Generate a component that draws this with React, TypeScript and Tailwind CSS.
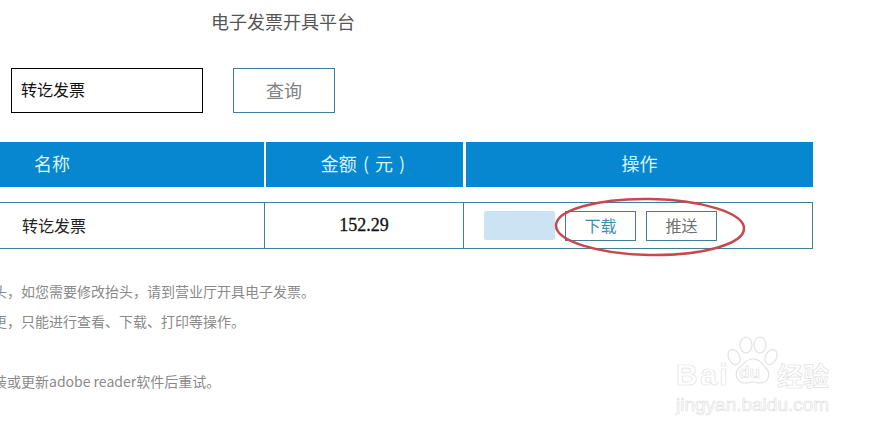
import React from "react";

const cjk = "font-['Microsoft_YaHei','Noto_Sans_CJK_SC',sans-serif]";

const notes = [
  "头，如您需要修改抬头，请到营业厅开具电子发票。",
  "更，只能进行查看、下载、打印等操作。",
  "",
  "装或更新adobe reader软件后重试。",
];

const Watermark: React.FC = () => (
  <div className="absolute left-[676px] top-[335px] w-[180px] h-[80px] font-['Liberation_Sans',sans-serif] text-white [-webkit-text-stroke:0.7px_#e2e2e2]">
    <svg className="absolute left-[50px] top-[1px]" width="52" height="50" viewBox="0 0 52 50" fill="#fff" stroke="#e2e2e2" strokeWidth="1.2">
      <ellipse cx="8" cy="21" rx="5.5" ry="8" transform="rotate(-25 8 21)" />
      <ellipse cx="20" cy="9" rx="6" ry="8" />
      <ellipse cx="34" cy="9" rx="6" ry="8" />
      <ellipse cx="45" cy="21" rx="5.5" ry="8" transform="rotate(25 45 21)" />
      <path d="M27 23c7 0 9 5 13 9 5 5 3 15-6 15-3 0-4-1-7-1s-5 1-8 1c-9 0-11-10-6-15 5-4 7-9 14-9z" />
    </svg>
    <div className="absolute left-0 top-[23px] text-[30px] leading-[34px] font-bold tracking-[2.5px]">Bai</div>
    <div className="absolute left-[63px] top-[28px] text-[17px] leading-[20px] font-bold">du</div>
    <div className={`absolute left-[101px] top-[24px] text-[26px] leading-[32px] font-bold whitespace-nowrap ${cjk}`}>经验</div>
    <div className="absolute left-0 top-[58px] text-[19px] leading-[24px] whitespace-nowrap">jingyan.baidu.com</div>
  </div>
);

const App: React.FC = () => {
  return (
    <div className={`relative w-[881px] h-[432px] overflow-hidden bg-white ${cjk}`}>
      <div className="ml-[-247px] w-[1060px]">
        <h1 className="pt-[8px] h-[68px] text-center text-[18px] leading-[26px] font-normal text-[#555]">
          电子发票开具平台
        </h1>

        <div className="flex pl-[258px] gap-[30px]">
          <div className="w-[192px] h-[45px] pl-[9px] pb-[3px] flex items-center border border-black text-[16px] text-[#111]">
            转讫发票
          </div>
          <button className="w-[102px] h-[45px] pb-[1px] border border-[#3f7f9c] text-[18px] text-[#808080]">
            查询
          </button>
        </div>

        <div className="mt-[29px] flex h-[45px] gap-[2px] bg-white text-[18px] text-[#d8f3fa]">
          <div className="w-[511px] bg-[#0787cf] pl-[281px] pb-[2px] flex items-center">名称</div>
          <div className="w-[197px] bg-[#0787cf] pr-[3px] pb-[2px] flex items-center justify-center [word-spacing:2px]">金额 ( 元 )</div>
          <div className="flex-1 ml-[1px] bg-[#0787cf] pb-[2px] flex items-center justify-center">操作</div>
        </div>

        <div className="mt-[15px] flex h-[47px] border border-[#3f7f9c] text-[16px] text-[#222]">
          <div className="w-[511px] pl-[268px] pb-[2px] flex items-center border-r border-[#3f7f9c]">转讫发票</div>
          <div className="w-[199px] pb-[1px] flex items-center justify-center border-r border-[#3f7f9c] font-['Liberation_Serif',serif] text-[18px] text-[#111] [-webkit-text-stroke:0.3px_#111]">
            152.29
          </div>
          <div className="flex-1 pl-[20px] flex items-center">
            <div className="w-[71px] h-[29px] rounded-[2px] bg-[#cce3f3]" />
            <button className="ml-[10px] w-[71px] h-[30px] pb-[1px] border border-[#3f7f9c] text-[16px] text-[#3d8fae]">
              下载
            </button>
            <button className="ml-[10px] w-[71px] h-[30px] pb-[1px] border border-[#3f7f9c] text-[16px] text-[#707070]">
              推送
            </button>
          </div>
        </div>

        <div className="mt-[27px] pl-[240px] text-[14px] leading-[30px] text-[#8a8a8a]">
          {notes.map((line, i) => (
            <p key={i} className="h-[30px]">{line}</p>
          ))}
        </div>
      </div>

      {/* hand drawn ring round the two buttons */}
      <svg className="absolute left-[550px] top-[192px]" width="200" height="70" viewBox="0 0 200 70" fill="none">
        <ellipse cx="100" cy="35" rx="94" ry="28" stroke="#c9484c" strokeWidth="2.5" transform="rotate(1 100 35)" />
      </svg>

      <Watermark />
    </div>
  );
};

export default App;
